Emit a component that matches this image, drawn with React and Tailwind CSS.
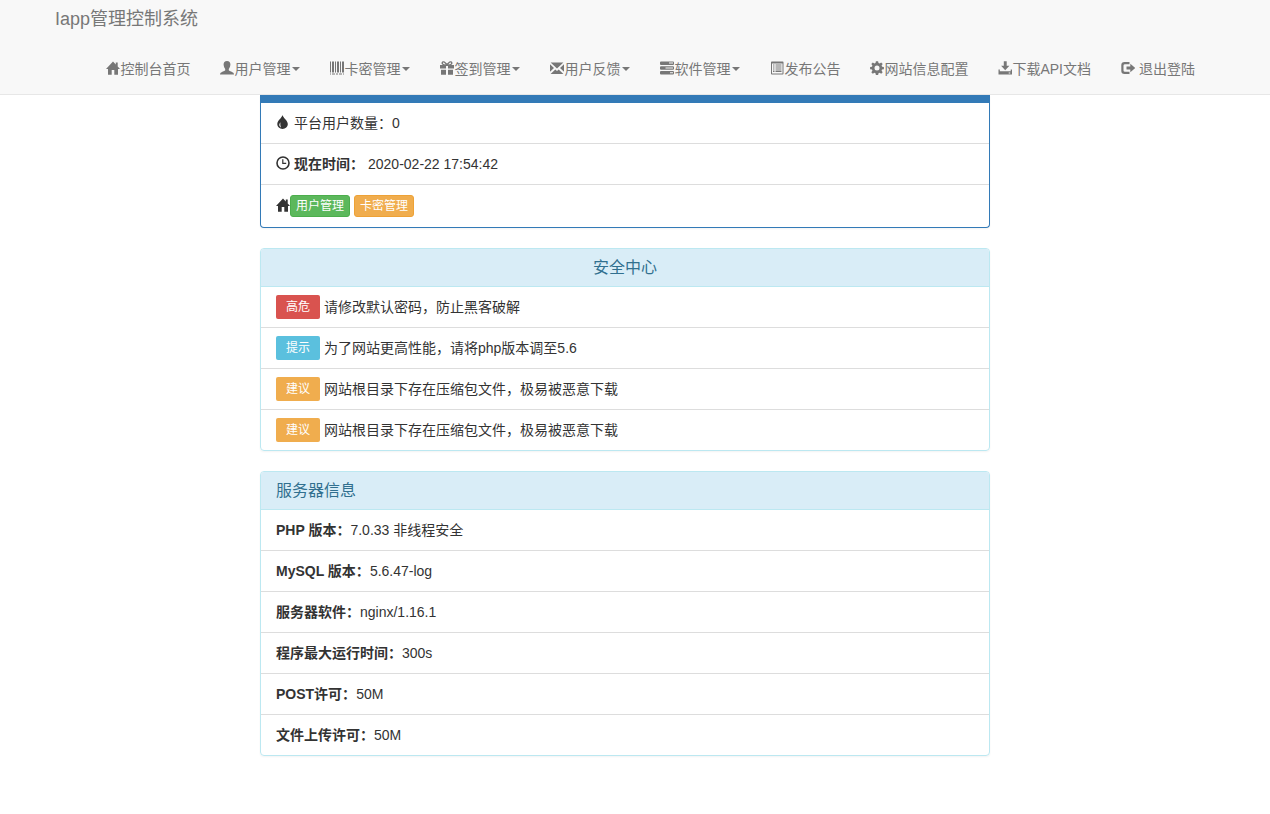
import clsx from 'clsx';

const icons = {
  home: <path d="M7 .4 0 8h2v5.7h3.7V9h2.6v4.7H12V8h2l-2.3-2.5V1.400H9.800v2z" />,
  user: (
    <path d="M7 0C4.700 0 3.500 1.500 3.600 3.600 3.700 5.500 4.300 7 5.200 8v1.300C5 10 2.500 10.600 1.200 11.400.5 11.800 0 12.500 0 13.500h14c0-1-.5-1.700-1.200-2.100C11.500 10.600 9 10 8.800 9.300V8c.9-1 1.500-2.500 1.600-4.400C10.500 1.500 9.300 0 7 0z" />
  ),
  barcode: (
    <path d="M0 .5h1v11H0zM2 .5h2v11H2zM5 .5h1v11H5zM7 .5h2v11H7zM10 .5h1v11h-1zM12 .5h2v11h-2zM0 12.500h1v1H0zM2 12.500h3v1H2zM6 12.500h2v1H6zM9 12.500h3v1H9zM13 12.500h1v1h-1z" />
  ),
  gift: (
    <path
      fillRule="evenodd"
      d="M0 4h3.200C1.800 3.600 1.300 2.600 1.600 1.600 2 .3 3.600-.1 4.900.8L7 2.600 9.100.8c1.300-.9 2.900-.5 3.300.8.3 1-.2 2-1.600 2.400H14v3.500H8V5H6v2.500H0zM3 1.900c-.2.800.6 1.300 2.600 1.500C4.400 1.700 3.300 1.200 3 1.900zM11 1.900c.2.800-.6 1.300-2.600 1.500C9.600 1.700 10.700 1.200 11 1.900zM1 8.700h5v5.100H1zM8 8.700h5v5.100H8z"
    />
  ),
  envelope: (
    <path d="M.6 1.500h12.800L7 7.600zM0 3.300 4 7l-4 3.700zM14 3.300 10 7l4 3.700zM.6 12.900 5.300 8.400 7 9.900l1.700-1.500 4.700 4.500z" />
  ),
  tasks: (
    <path
      fillRule="evenodd"
      d="M1 .4h12q1 0 1 1v1.500q0 1-1 1H1q-1 0-1-1V1.400q0-1 1-1zM9 1.500v1h4v-1zM1 5.200h12q1 0 1 1v1.500q0 1-1 1H1q-1 0-1-1V6.200q0-1 1-1zM5.500 6.400v1H13v-1zM1 10h12q1 0 1 1v1.500q0 1-1 1H1q-1 0-1-1V11q0-1 1-1zM10 11.200v1h3v-1z"
    />
  ),
  list: (
    <path
      fillRule="evenodd"
      d="M1.800.5h10.900q.8 0 .8.800v11.400q0 .8-.8.800H1.800q-.8 0-.8-.8V1.300q0-.8.8-.8zM2 2.500v10h10.500v-10zM3 3.500h1.500v1H3zM5.500 3.500h6v1h-6zM3 5.500h1.500v1H3zM5.500 5.500h6v1h-6zM3 7.500h1.500v1H3zM5.500 7.500h6v1h-6zM3 9.500h1.500v1.500H3zM5.500 9.500h6v1.500h-6z"
    />
  ),
  cog: (
    <path
      fillRule="evenodd"
      d="M5.900.2h2.200l.4 1.900 1.100.4 1.600-1.100 1.500 1.500-1.100 1.600.5 1.200 1.800.3v2.200l-1.900.4-.4 1.100 1.100 1.600-1.500 1.500-1.600-1-1.100.4-.4 1.900H5.900l-.4-1.900-1.100-.4-1.600 1-1.500-1.500 1.100-1.600L2 8.600.1 8.200V6L2 5.700l.4-1.200-1.100-1.600 1.500-1.500 1.600 1.100 1.100-.4zM7 4.600a2.500 2.500 0 1 0 0 5 2.500 2.500 0 0 0 0-5z"
    />
  ),
  download: (
    <path
      fillRule="evenodd"
      d="M5.800.2h2.900v4.600h2.700L7.200 9.300 3.100 4.800h2.700zM.5 8.500h1.300v1.800h10.900V8.500H14v5.100H.5zM10.700 11.500v1h1.600v-1z"
    />
  ),
  logout: (
    <path d="M3.500 1h5v2.200H4Q2.500 3.200 2.500 4.500v5Q2.500 10.800 4 10.800h4.500V13h-5Q.3 13 .3 10V4q0-3 3.200-3zM9.300 2.800l5 4.200-5 4.200V8.600H5.500V5.400h3.800z" />
  ),
  tint: (
    <path
      fillRule="evenodd"
      d="M6.500 0c.5 2.800 5.300 5.500 5.300 9 0 2.900-2.300 4.900-5.200 4.900S1.300 11.900 1.300 9C1.300 5.500 6 2.800 6.500 0zM4.500 7.300C3 8.900 2.700 11.300 5 12.400 4.200 10.600 4.200 9 4.500 7.300z"
    />
  ),
  time: (
    <path
      fillRule="evenodd"
      d="M7 .2a6.800 6.800 0 1 0 0 13.600A6.800 6.800 0 0 0 7 .2zM7 1.800a5.200 5.200 0 1 1 0 10.400A5.200 5.200 0 0 1 7 1.800zM6.200 3.200h1.200v3.600h2.800V8h-4z"
    />
  ),
};

const Icon = ({ name }) => (
  <svg viewBox="0 0 14 14" className="-mt-0.5 size-[14px] shrink-0 fill-current" aria-hidden="true">
    {icons[name]}
  </svg>
);

const navItems = [
  { label: '控制台首页', icon: 'home' },
  { label: '用户管理', icon: 'user', menu: true },
  { label: '卡密管理', icon: 'barcode', menu: true },
  { label: '签到管理', icon: 'gift', menu: true },
  { label: '用户反馈', icon: 'envelope', menu: true },
  { label: '软件管理', icon: 'tasks', menu: true },
  { label: '发布公告', icon: 'list' },
  { label: '网站信息配置', icon: 'cog' },
  { label: '下载API文档', icon: 'download' },
  { label: '退出登陆', icon: 'logout', spaced: true },
];

const notices = [
  { level: '高危', color: 'bg-[#d9534f]', text: '请修改默认密码，防止黑客破解' },
  { level: '提示', color: 'bg-[#5bc0de]', text: '为了网站更高性能，请将php版本调至5.6' },
  { level: '建议', color: 'bg-[#f0ad4e]', text: '网站根目录下存在压缩包文件，极易被恶意下载' },
  { level: '建议', color: 'bg-[#f0ad4e]', text: '网站根目录下存在压缩包文件，极易被恶意下载' },
];

const serverInfo = [
  { label: 'PHP 版本：', value: '7.0.33 非线程安全' },
  { label: 'MySQL 版本：', value: '5.6.47-log' },
  { label: '服务器软件：', value: 'nginx/1.16.1' },
  { label: '程序最大运行时间：', value: '300s' },
  { label: 'POST许可：', value: '50M' },
  { label: '文件上传许可：', value: '50M' },
];

const Navbar = () => (
  <header className="border-b border-[#e7e7e7] bg-[#f8f8f8] pr-5 text-[#777]">
    <div className="mx-auto max-w-[1170px]">
      <div className="flex h-11 items-center px-[15px] pb-1.5">
        <a href="#" className="text-lg leading-5">Iapp管理控制系统</a>
      </div>
      <nav>
        <ul className="flex justify-end">
          {navItems.map((item) => (
            <li key={item.label}>
              <a
                href="#"
                className={clsx('flex h-[50px] items-center px-[15px] whitespace-nowrap', item.spaced && 'gap-1')}
              >
                <Icon name={item.icon} />
                {item.label}
                {item.menu && (
                  <span className="ml-0.5 border-x-4 border-t-4 border-x-transparent border-t-current" />
                )}
              </a>
            </li>
          ))}
        </ul>
      </nav>
    </div>
  </header>
);

const Panel = ({ title, centered, children }) => (
  <section className="mb-5 overflow-hidden rounded border border-[#bce8f1] shadow-xs">
    <h3
      className={clsx(
        'border-b border-[#bce8f1] bg-[#d9edf7] px-[15px] py-2.5 text-base leading-[17px] text-[#31708f]',
        centered && 'text-center'
      )}
    >
      {title}
    </h3>
    <ul className="divide-y divide-[#ddd]">{children}</ul>
  </section>
);

const Row = ({ children, className }) => (
  <li className={clsx('flex items-center px-[15px] py-2.5', className)}>{children}</li>
);

const App = () => {
  return (
    <div className="min-h-screen bg-white font-['Liberation_Sans','Noto_Sans_CJK_SC',sans-serif] text-sm leading-5 text-[#333]">
      <Navbar />

      <main className="pr-5">
        <div className="mx-auto max-w-[730px]">
          <section className="mb-5 overflow-hidden rounded-b border-x border-b border-[#337ab7] shadow-xs">
            <div className="h-2 bg-[#337ab7]" />
            <ul className="divide-y divide-[#ddd]">
              <Row className="gap-1">
                <Icon name="tint" />
                <span>平台用户数量：0</span>
              </Row>
              <Row className="gap-1">
                <Icon name="time" />
                <b>现在时间：</b>
                <span>2020-02-22 17:54:42</span>
              </Row>
              <Row>
                <Icon name="home" />
                <button
                  type="button"
                  className="mr-1 h-[22px] rounded-[3px] border border-[#4cae4c] bg-[#5cb85c] px-[5px] text-xs text-white"
                >
                  用户管理
                </button>
                <button
                  type="button"
                  className="h-[22px] rounded-[3px] border border-[#eea236] bg-[#f0ad4e] px-[5px] text-xs text-white"
                >
                  卡密管理
                </button>
              </Row>
            </ul>
          </section>

          <Panel title="安全中心" centered>
            {notices.map((notice, index) => (
              <Row key={index} className="gap-1">
                <span className={clsx('-my-0.5 rounded-xs px-2.5 py-0.5 text-xs leading-5 text-white', notice.color)}>
                  {notice.level}
                </span>
                <span>{notice.text}</span>
              </Row>
            ))}
          </Panel>

          <Panel title="服务器信息">
            {serverInfo.map((info) => (
              <Row key={info.label}>
                <b>{info.label}</b>
                <span>{info.value}</span>
              </Row>
            ))}
          </Panel>
        </div>
      </main>
    </div>
  );
};

export default App;
